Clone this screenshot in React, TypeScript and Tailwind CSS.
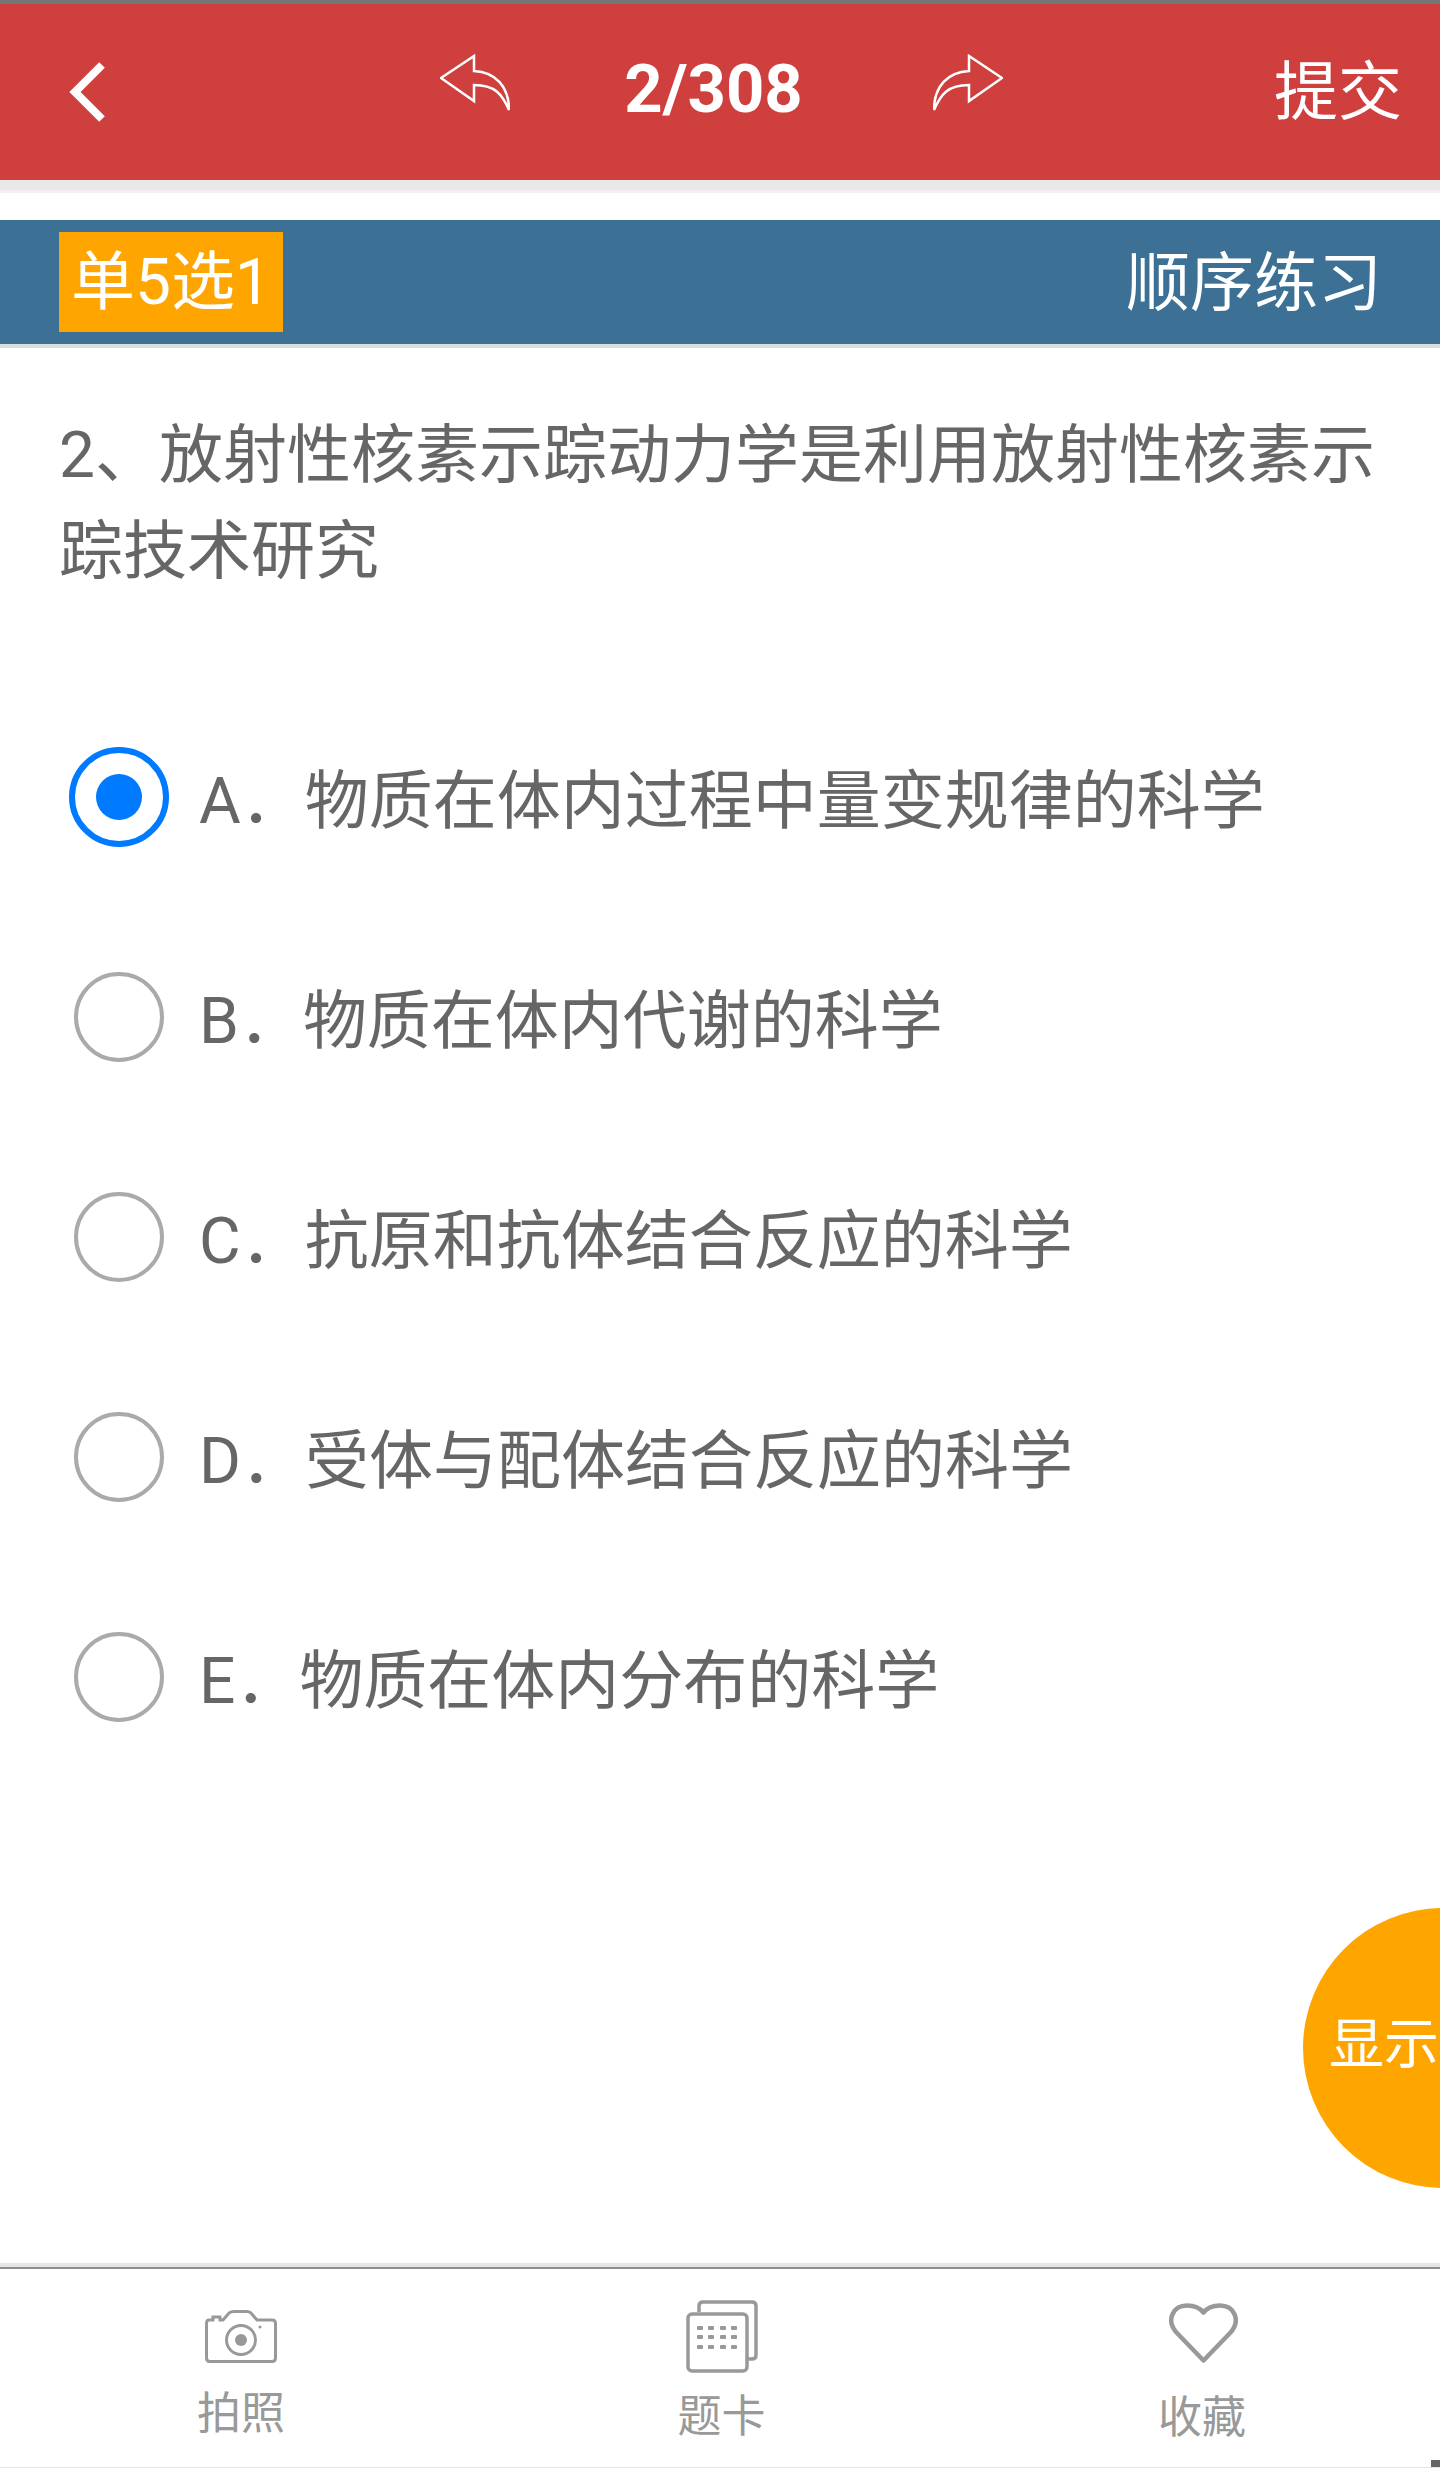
const options = [
  { label: 'A．', text: '物质在体内过程中量变规律的科学', selected: true },
  { label: 'B．', text: '物质在体内代谢的科学', selected: false },
  { label: 'C．', text: '抗原和抗体结合反应的科学', selected: false },
  { label: 'D．', text: '受体与配体结合反应的科学', selected: false },
  { label: 'E．', text: '物质在体内分布的科学', selected: false },
];

function ReplyArrow({ className = '' }: { className?: string }) {
  return (
    <svg viewBox="0 0 70 58" className={`h-[58px] w-[70px] ${className}`} fill="none" stroke="#fff" strokeWidth="2.5">
      <path d="M1 24 L34 2 V17 C55 18 69 32 69 56 C62 40 55 31 34 31 V47 Z" />
    </svg>
  );
}

function CameraIcon() {
  return (
    <svg viewBox="0 0 72 53" className="h-[53px] w-[72px]" fill="none" stroke="#999" strokeWidth="3">
      <path d="M4 10 H8 V7 H15 V10 H18 L24 3 Q26 1.500 29 1.500 H42 Q44 1.500 46 3 L52 10 H67 Q70.500 10 70.500 13.500 V48 Q70.500 51.500 67 51.500 H5 Q1.500 51.500 1.500 48 V13.500 Q1.500 10 4 10 Z" />
      <circle cx="36" cy="30" r="14.500" />
      <circle cx="36" cy="30" r="6" fill="#999" stroke="none" />
      <circle cx="55" cy="17" r="1.500" fill="#999" stroke="none" />
    </svg>
  );
}

function CardIcon() {
  const xs = [14, 25, 37, 48];
  const ys = [26, 35, 45];
  return (
    <svg viewBox="0 0 72 73" className="h-[73px] w-[72px]" fill="none" stroke="#999" strokeWidth="3.5">
      <path d="M13 12 V6 Q13 2 17 2 H66 Q70 2 70 6 V55 Q70 59 66 59 H62" />
      <rect x="2" y="14" width="59" height="57" rx="4" />
      {ys.map((y) =>
        xs.map((x) => <rect key={`${x}-${y}`} x={x - 3} y={y} width="6" height="4" rx="1" fill="#999" stroke="none" />),
      )}
    </svg>
  );
}

function HeartIcon() {
  return (
    <svg viewBox="0 0 69 60" className="h-[60px] w-[69px]" fill="none" stroke="#999" strokeWidth="4.5" strokeLinejoin="round">
      <path d="M34.500 57.500 L7 29 C-3 17 4 2.500 18 2.500 C25 2.500 31 5 34.500 9.500 C38 5 44 2.500 51 2.500 C65 2.500 72 17 62 29 Z" />
    </svg>
  );
}

export default function App() {
  return (
    <div className="relative flex h-[2468px] w-[1440px] flex-col overflow-hidden bg-white font-['Roboto','Noto_Sans_CJK_SC',sans-serif] text-[64px] text-[#666]">
      <div className="h-[4px] bg-[#757575]" />
      <header className="grid h-[176px] grid-cols-[1fr_auto_1fr] items-center bg-[#cf3f3e] text-white">
        <div className="pl-[69px]">
          <svg viewBox="0 0 36 60" className="h-[60px] w-[36px]" fill="none" stroke="#fff" strokeWidth="8">
            <path d="M33 3 L6 30 L33 57" />
          </svg>
        </div>
        <div className="ml-[3px] flex items-center">
          <ReplyArrow className="-translate-y-[9px]" />
          <span className="mr-[130px] ml-[114px] -translate-y-[3px] text-[67px] leading-none font-bold">2/308</span>
          <ReplyArrow className="-translate-y-[9px] -scale-x-100" />
        </div>
        <div className="pt-[2px] pr-[38px] text-right leading-none">提交</div>
      </header>
      <div className="h-[13px] border-b-[3px] border-[#f5efef] bg-[#e8e8e8]" />

      <div className="mt-[27px] flex h-[124px] items-center justify-between bg-[#3c7195] pr-[58px] pl-[59px] text-white">
        <span className="flex h-[100px] w-[224px] items-center justify-center bg-[#ffa500] pt-[2px] leading-none">单5选1</span>
        <span className="pt-[3px] leading-none">顺序练习</span>
      </div>
      <div className="h-[4px] bg-[#d9dde0]" />

      <p className="mt-[60px] px-[59px] leading-[96px]">2、放射性核素示踪动力学是利用放射性核素示踪技术研究</p>

      <ul className="mt-[87px]">
        {options.map((o) => (
          <li key={o.label} className="flex h-[220px] items-center pl-[69px]">
            <span className="flex h-[100px] w-[100px] items-center justify-center">
              {o.selected ? (
                <span className="flex h-[100px] w-[100px] items-center justify-center rounded-full border-[6px] border-[#007aff]">
                  <span className="h-[46px] w-[46px] rounded-full bg-[#007aff]" />
                </span>
              ) : (
                <span className="h-[90px] w-[90px] rounded-full border-[4px] border-[#aaa]" />
              )}
            </span>
            <span className="ml-[30px] pt-[10px]">
              {o.label}
              {o.text}
            </span>
          </li>
        ))}
      </ul>

      {/* floating button hangs off the right edge */}
      <div className="absolute top-[1908px] left-[1303px] flex h-[280px] w-[280px] items-center rounded-full bg-[#ffa500] pb-[8px] pl-[26px] text-[55px] leading-none whitespace-nowrap text-white">
        显示
      </div>

      <footer className="mt-auto flex h-[205px] flex-col text-[44px] leading-none text-[#999]">
        <div className="h-[4px] bg-[#e8e6e4]" />
        <div className="grid flex-1 grid-cols-3 border-t-2 border-b border-t-[#8f8f8f] border-b-[#e5e5e5]">
          <div className="flex flex-col items-center pt-[41px] pl-[2px]">
            <CameraIcon />
            <span className="mt-[29px]">拍照</span>
          </div>
          <div className="flex flex-col items-center pt-[31px] pl-[3px]">
            <CardIcon />
            <span className="mt-[22px]">题卡</span>
          </div>
          <div className="flex flex-col items-center pt-[34px] pl-[6px]">
            <HeartIcon />
            <span className="mt-[33px] -ml-[2px]">收藏</span>
          </div>
        </div>
      </footer>
      <div className="absolute right-0 bottom-[1px] h-[7px] w-[9px] bg-[#666]" />
    </div>
  );
}
